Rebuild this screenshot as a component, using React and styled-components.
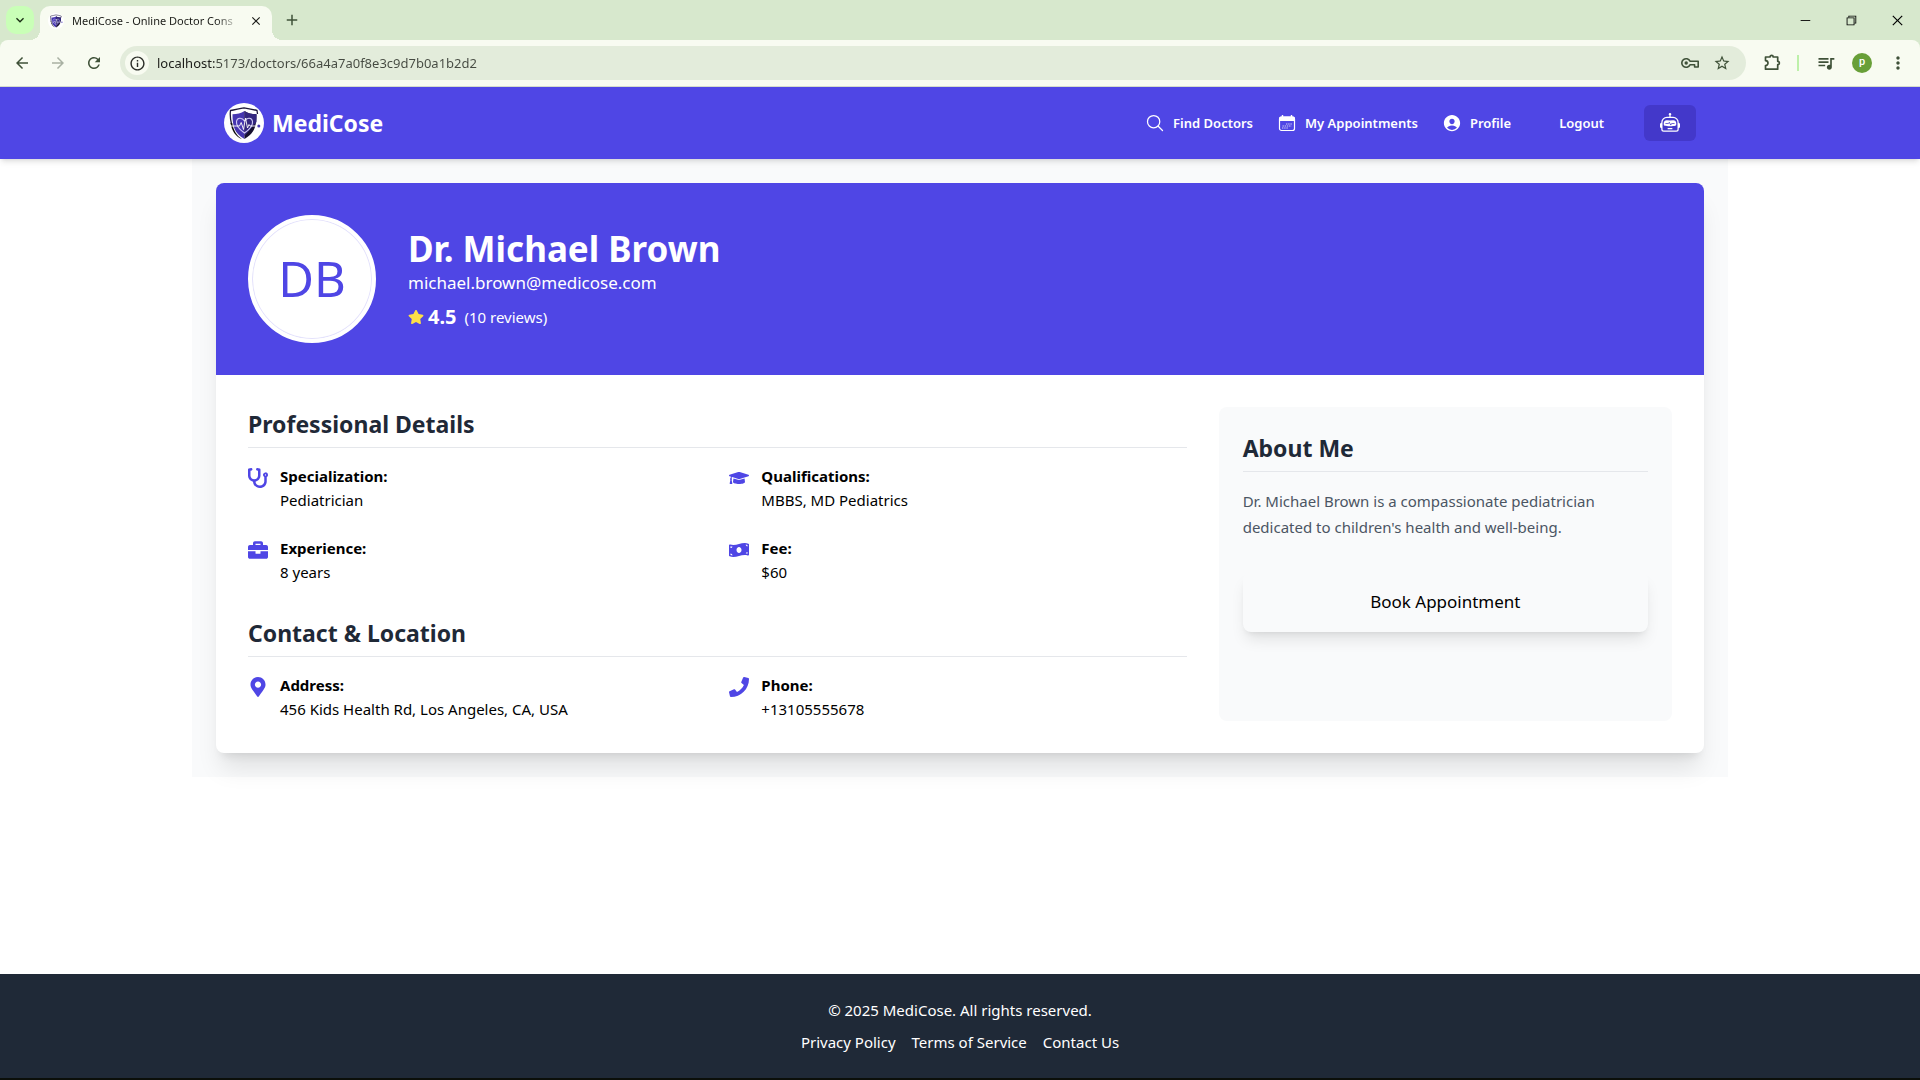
import React from 'react';
import styled, { createGlobalStyle } from 'styled-components';
import {
  FaStethoscope,
  FaGraduationCap,
  FaBriefcase,
  FaMoneyBillWave,
  FaMapMarkerAlt,
  FaPhone,
  FaStar,
} from 'react-icons/fa';
import { IoSearchOutline, IoPersonCircle } from 'react-icons/io5';
import { BsRobot } from 'react-icons/bs';
import {
  MdArrowBack,
  MdArrowForward,
  MdRefresh,
  MdInfoOutline,
  MdStarBorder,
  MdQueueMusic,
  MdMoreVert,
  MdKeyboardArrowDown,
  MdClose,
  MdAdd,
} from 'react-icons/md';
import { VscChromeMinimize, VscChromeRestore, VscChromeClose } from 'react-icons/vsc';

const GlobalStyle = createGlobalStyle`
  *, *::before, *::after { box-sizing: border-box; }
  body {
    margin: 0;
    background: #ffffff;
    color: #000000;
    font-family: "Noto Sans", "Open Sans", sans-serif;
    font-size: 15px;
    line-height: 24px;
  }
  h1, h2, p, dl, dd { margin: 0; padding: 0; }
  a { color: inherit; text-decoration: none; }
  button, input { font: inherit; color: inherit; border: 0; padding: 0; background: none; }
  button { cursor: pointer; }
  svg { display: block; flex-shrink: 0; }
`;

const Screen = styled.div`
  display: flex;
  flex-direction: column;
  min-height: 100vh;
  border-bottom: 2px solid #0b0f0a;
`;

/* Browser window */

const TabStrip = styled.div`
  display: flex;
  align-items: center;
  height: 40px;
  padding-left: 6px;
  background: #d7e8cd;
`;

const TabSearch = styled.button`
  display: grid;
  place-items: center;
  width: 28px;
  height: 28px;
  margin: 0 6px 6px 0;
  align-self: flex-end;
  border-radius: 10px;
  background: #c9ffb7;
  color: #1a2e14;
`;

const Tab = styled.div`
  position: relative;
  display: flex;
  align-items: center;
  gap: 8px;
  width: 232px;
  height: 34px;
  padding: 0 8px 4px;
  align-self: flex-end;
  border-radius: 10px 10px 0 0;
  background: #f8fbf1;

  &::before,
  &::after {
    content: '';
    position: absolute;
    bottom: 0;
    width: 10px;
    height: 10px;
  }
  &::before {
    left: -10px;
    background: radial-gradient(circle at 0 0, transparent 10px, #f8fbf1 10px);
  }
  &::after {
    right: -10px;
    background: radial-gradient(circle at 100% 0, transparent 10px, #f8fbf1 10px);
  }
`;

const TabTitle = styled.span`
  flex: 1;
  overflow: hidden;
  white-space: nowrap;
  font-size: 11px;
  color: #1b1c18;
  mask-image: linear-gradient(to right, #000 86%, transparent);
`;

const StripButton = styled.button`
  display: grid;
  place-items: center;
  width: ${(p) => p.$width || 16}px;
  height: ${(p) => p.$height || 16}px;
  color: ${(p) => p.$color || '#1b1c18'};
`;

const NewTab = styled(StripButton)`
  margin: 0 auto 6px 6px;
  align-self: flex-end;
`;

const WindowButtons = styled.div`
  display: flex;
`;

const ToolbarBack = styled.div`
  background: #d7e8cd;
`;

const Toolbar = styled.div`
  display: flex;
  align-items: center;
  height: 47px;
  padding: 0 4px;
  border-bottom: 1px solid #d5dccd;
  border-radius: 8px 8px 0 0;
  background: #f8fbf1;
`;

const ToolButton = styled.button`
  display: grid;
  place-items: center;
  width: ${(p) => (p.$narrow ? 28 : 36)}px;
  height: 34px;
  color: ${(p) => (p.$faded ? '#a9b1a3' : '#3f5138')};
`;

const AddressBar = styled.label`
  display: flex;
  flex: 1;
  align-items: center;
  height: 34px;
  margin: 0 8px;
  padding: 0 6px 0 5px;
  border-radius: 17px;
  background: #e3ecdb;
`;

const SiteInfo = styled.span`
  display: grid;
  place-items: center;
  width: 24px;
  height: 24px;
  margin-right: 8px;
  border-radius: 50%;
  background: #f8fbf1;
  color: #2b2d28;
`;

const Url = styled.input`
  flex: 1;
  min-width: 0;
  font-size: 13px;
  color: transparent;
  caret-color: #1b1c18;
  background: linear-gradient(to right, #1b1c18 59px, #454a41 59px);
  background-clip: text;
  outline: none;
`;

const Divider = styled.span`
  width: 2px;
  height: 16px;
  margin: 0 9px 0 7px;
  background: #bdf0a9;
`;

const UserBadge = styled.button`
  display: grid;
  justify-content: center;
  align-content: start;
  width: 20px;
  height: 20px;
  margin: 0 8px;
  border-radius: 50%;
  background: #689f38;
  color: #ffffff;
  font-family: Roboto, sans-serif;
  font-size: 11px;
  font-weight: 500;
  line-height: 17px;
`;

/* Site */

const NavBar = styled.header`
  position: relative;
  z-index: 1;
  background: #4f46e5;
  color: #ffffff;
  box-shadow: 0 4px 6px -1px rgba(0, 0, 0, 0.1), 0 2px 4px -2px rgba(0, 0, 0, 0.1);
`;

const NavInner = styled.div`
  display: flex;
  align-items: center;
  justify-content: space-between;
  max-width: 1536px;
  margin: 0 auto;
  padding: 16px 32px;
`;

const Brand = styled.a`
  display: flex;
  align-items: center;
  gap: 8px;
  font-size: 23px;
  font-weight: 700;
  line-height: 32px;
`;

const Nav = styled.nav`
  display: flex;
  align-items: center;
  gap: 24px;
  font-size: 13px;
  font-weight: 600;
`;

const NavLink = styled.a`
  display: flex;
  align-items: center;
  gap: 8px;
`;

const LogoutButton = styled.button`
  margin-left: 8px;
  padding: 6px 16px;
`;

const BotButton = styled.button`
  padding: 8px 16px;
  border-radius: 6px;
  background: #4338ca;
`;

const Main = styled.main`
  flex: 1;
`;

const Container = styled.div`
  max-width: 1536px;
  margin: 0 auto;
  padding: 24px;
  background: #f9fafb;
`;

const Card = styled.article`
  border-radius: 8px;
  background: #ffffff;
  box-shadow: 0 20px 25px -5px rgba(0, 0, 0, 0.1), 0 8px 10px -6px rgba(0, 0, 0, 0.1);
`;

const Hero = styled.div`
  display: flex;
  align-items: center;
  gap: 32px;
  padding: 32px;
  border-radius: 8px 8px 0 0;
  background: #4f46e5;
  color: #ffffff;
`;

const Avatar = styled.div`
  display: grid;
  justify-content: center;
  width: 128px;
  height: 128px;
  border: 4px solid #ffffff;
  border-radius: 50%;
  background: #ffffff;
  box-shadow: inset 0 0 0 1px #e4e2fc;
  color: #4f46e5;
  font-size: 49px;
  line-height: 118px;
`;

const DoctorName = styled.h1`
  font-size: 35px;
  font-weight: 700;
  line-height: 44px;
`;

const Email = styled.p`
  font-size: 17px;
  line-height: 24px;
`;

const Rating = styled.div`
  display: flex;
  align-items: center;
  gap: 4px;
  margin-top: 8px;
  line-height: 28px;
`;

const Score = styled.strong`
  margin-right: 4px;
  font-size: 20px;
  font-weight: 700;
`;

const Body = styled.div`
  display: grid;
  grid-template-columns: repeat(3, 1fr);
  gap: 32px;
  padding: 32px;
`;

const Details = styled.div`
  display: flex;
  flex-direction: column;
  grid-column: span 2;
  gap: 32px;
`;

const SectionTitle = styled.h2`
  margin-bottom: 16px;
  padding-bottom: 6px;
  border-bottom: 1px solid #e5e7eb;
  color: #1f2937;
  font-size: 23px;
  font-weight: 700;
  line-height: 34px;
`;

const DetailGrid = styled.dl`
  display: grid;
  grid-template-columns: repeat(2, 1fr);
  gap: 24px;
`;

const DetailItem = styled.div`
  display: grid;
  grid-template-columns: 20px 1fr;
  column-gap: 12px;

  svg {
    grid-row: span 2;
    margin-top: 4px;
    color: #4f46e5;
  }
  dt {
    font-weight: 700;
  }
`;

const About = styled.aside`
  padding: 24px;
  border-radius: 8px;
  background: #f9fafb;
`;

const Bio = styled.p`
  color: #4b5563;
  line-height: 26px;
`;

const BookButton = styled.button`
  width: 100%;
  margin-top: 32px;
  padding: 16px;
  border-radius: 8px;
  font-size: 17px;
  line-height: 28px;
  background: #f9fafb;
  box-shadow: 0 10px 15px -3px rgba(0, 0, 0, 0.1), 0 4px 6px -4px rgba(0, 0, 0, 0.1);
`;

const Footer = styled.footer`
  padding: 24px;
  background: #1f2937;
  color: #ffffff;
  text-align: center;
`;

const FooterLinks = styled.nav`
  display: flex;
  justify-content: center;
  gap: 16px;
  margin-top: 8px;
`;

function Logo({ size }) {
  return (
    <svg width={size} height={size} viewBox="0 0 40 40" aria-hidden="true">
      <circle cx="20" cy="20" r="20" fill="#fff" />
      <path d="M20.5 8C17 10.6 13 11 8.5 11.2C8.5 22 10 30.5 20.5 36Z" fill="#4636b0" />
      <path d="M20.5 8C24 10.6 28 11 32.5 11.2C32.5 22 31 30.5 20.5 36Z" fill="#17102e" />
      <path d="M20.5 8C24 10.6 28 11 32.5 11.2V19L20.5 33Z" fill="#33267f" />
      <path
        d="M7.5 21C6.3 16 6 11 6.5 7.5C11 7 15 5.5 20 4.8C25 5.5 29 6.5 33 7.5L33.5 11"
        fill="none"
        stroke="#1c1638"
        strokeWidth="1.3"
      />
      <path d="M6.5 20C8 28 11 33 18 36.2C12 32 9.5 27 8.2 20Z" fill="#111" />
      <path
        d="M20.5 30C14 25.5 12 22 12.5 18.5C13 14.5 18 14 20.5 18C23 14 28 14.5 28.5 18.5C29 22 27 25.5 20.5 30Z"
        fill="none"
        stroke="#d0cbf6"
        strokeWidth="1.1"
      />
      <path
        d="M7 23H15.5L17.2 19.5L19.5 26.5L21.5 15L23.5 25L25 21.5L26 23H33"
        fill="none"
        stroke="#fff"
        strokeWidth="0.9"
      />
      <circle cx="34.8" cy="23" r="1.5" fill="#4636b0" />
    </svg>
  );
}

function CalendarIcon() {
  return (
    <svg width="20" height="20" viewBox="0 0 20 20" fill="none" stroke="currentColor" aria-hidden="true">
      <rect x="2.5" y="4" width="15" height="13.5" rx="2" strokeWidth="1.2" />
      <path d="M2 8V5.5A2 2 0 0 1 4 3.5H16A2 2 0 0 1 18 5.5V8Z" fill="currentColor" stroke="none" />
      <path d="M5.5 2V4M14.5 2V4" strokeWidth="1.4" />
      <path d="M9 11H15M5.5 13H14.5M5 15H11" strokeWidth="1" strokeDasharray="1.4 0.8" opacity="0.75" />
    </svg>
  );
}

function KeyIcon() {
  return (
    <svg width="20" height="20" viewBox="0 0 20 20" fill="none" stroke="currentColor" aria-hidden="true">
      <path
        d="M10 8.2H18.2V14H14.6V11.8H10A4.3 4.3 0 1 1 10 8.2Z"
        strokeWidth="1.6"
        strokeLinejoin="round"
      />
      <circle cx="6.2" cy="10" r="1.7" fill="currentColor" stroke="none" />
    </svg>
  );
}

function PuzzleIcon() {
  return (
    <svg width="20" height="20" viewBox="0 0 20 20" aria-hidden="true">
      <path
        d="M3.5 4H8A1.6 1.6 0 0 1 11.2 4H15.7V8.3A1.6 1.6 0 0 1 15.7 11.7V16.2H3.5V12.6A2.5 2.5 0 0 0 3.5 7.6Z"
        fill="none"
        stroke="currentColor"
        strokeWidth="1.7"
        strokeLinejoin="round"
      />
    </svg>
  );
}

const professional = [
  { icon: FaStethoscope, label: 'Specialization:', value: 'Pediatrician' },
  { icon: FaGraduationCap, label: 'Qualifications:', value: 'MBBS, MD Pediatrics' },
  { icon: FaBriefcase, label: 'Experience:', value: '8 years' },
  { icon: FaMoneyBillWave, label: 'Fee:', value: '$60' },
];

const contact = [
  { icon: FaMapMarkerAlt, label: 'Address:', value: '456 Kids Health Rd, Los Angeles, CA, USA' },
  { icon: FaPhone, label: 'Phone:', value: '+13105555678' },
];

function DetailSection({ title, items }) {
  return (
    <section>
      <SectionTitle>{title}</SectionTitle>
      <DetailGrid>
        {items.map(({ icon: Icon, label, value }) => (
          <DetailItem key={label}>
            <Icon size={20} />
            <dt>{label}</dt>
            <dd>{value}</dd>
          </DetailItem>
        ))}
      </DetailGrid>
    </section>
  );
}

function BrowserBar() {
  return (
    <>
      <TabStrip>
        <TabSearch aria-label="Search tabs">
          <MdKeyboardArrowDown size={16} />
        </TabSearch>
        <Tab>
          <Logo size={16} />
          <TabTitle>MediCose - Online Doctor Cons</TabTitle>
          <StripButton aria-label="Close tab">
            <MdClose size={14} stroke="currentColor" />
          </StripButton>
        </Tab>
        <NewTab $width={28} $height={28} $color="#3f5138" aria-label="New tab">
          <MdAdd size={18} />
        </NewTab>
        <WindowButtons>
          <StripButton $width={46} $height={40} $color="#000" aria-label="Minimize">
            <VscChromeMinimize size={14} />
          </StripButton>
          <StripButton $width={46} $height={40} $color="#000" aria-label="Restore">
            <VscChromeRestore size={14} />
          </StripButton>
          <StripButton $width={46} $height={40} $color="#000" aria-label="Close">
            <VscChromeClose size={15} />
          </StripButton>
        </WindowButtons>
      </TabStrip>
      <ToolbarBack>
        <Toolbar>
          <ToolButton aria-label="Back">
            <MdArrowBack size={18} />
          </ToolButton>
          <ToolButton $faded aria-label="Forward">
            <MdArrowForward size={18} />
          </ToolButton>
          <ToolButton aria-label="Reload">
            <MdRefresh size={18} />
          </ToolButton>
          <AddressBar>
            <SiteInfo>
              <MdInfoOutline size={17} />
            </SiteInfo>
            <Url
              type="text"
              aria-label="Address"
              defaultValue="localhost:5173/doctors/66a4a7a0f8e3c9d7b0a1b2d2"
            />
            <ToolButton $narrow aria-label="Passwords">
              <KeyIcon />
            </ToolButton>
            <ToolButton aria-label="Bookmark this page">
              <MdStarBorder size={18} />
            </ToolButton>
          </AddressBar>
          <ToolButton aria-label="Extensions">
            <PuzzleIcon />
          </ToolButton>
          <Divider />
          <ToolButton aria-label="Media controls">
            <MdQueueMusic size={20} />
          </ToolButton>
          <UserBadge aria-label="Account">p</UserBadge>
          <ToolButton aria-label="Menu">
            <MdMoreVert size={20} />
          </ToolButton>
        </Toolbar>
      </ToolbarBack>
    </>
  );
}

export default function App() {
  return (
    <Screen>
      <GlobalStyle />
      <BrowserBar />

      <NavBar>
        <NavInner>
          <Brand href="#">
            <Logo size={40} />
            MediCose
          </Brand>
          <Nav>
            <NavLink href="#">
              <IoSearchOutline size={20} />
              Find Doctors
            </NavLink>
            <NavLink href="#">
              <CalendarIcon />
              My Appointments
            </NavLink>
            <NavLink href="#">
              <IoPersonCircle size={20} />
              Profile
            </NavLink>
            <LogoutButton>Logout</LogoutButton>
            <BotButton aria-label="Assistant">
              <BsRobot size={20} />
            </BotButton>
          </Nav>
        </NavInner>
      </NavBar>

      <Main>
        <Container>
          <Card>
            <Hero>
              <Avatar>DB</Avatar>
              <div>
                <DoctorName>Dr. Michael Brown</DoctorName>
                <Email>michael.brown@medicose.com</Email>
                <Rating>
                  <FaStar size={16} color="#fde047" />
                  <Score>4.5</Score>
                  <span>(10 reviews)</span>
                </Rating>
              </div>
            </Hero>
            <Body>
              <Details>
                <DetailSection title="Professional Details" items={professional} />
                <DetailSection title="Contact & Location" items={contact} />
              </Details>
              <About>
                <SectionTitle>About Me</SectionTitle>
                <Bio>
                  Dr. Michael Brown is a compassionate pediatrician dedicated to children's health
                  and well-being.
                </Bio>
                <BookButton>Book Appointment</BookButton>
              </About>
            </Body>
          </Card>
        </Container>
      </Main>

      <Footer>
        <p>© 2025 MediCose. All rights reserved.</p>
        <FooterLinks>
          <a href="#">Privacy Policy</a>
          <a href="#">Terms of Service</a>
          <a href="#">Contact Us</a>
        </FooterLinks>
      </Footer>
    </Screen>
  );
}
